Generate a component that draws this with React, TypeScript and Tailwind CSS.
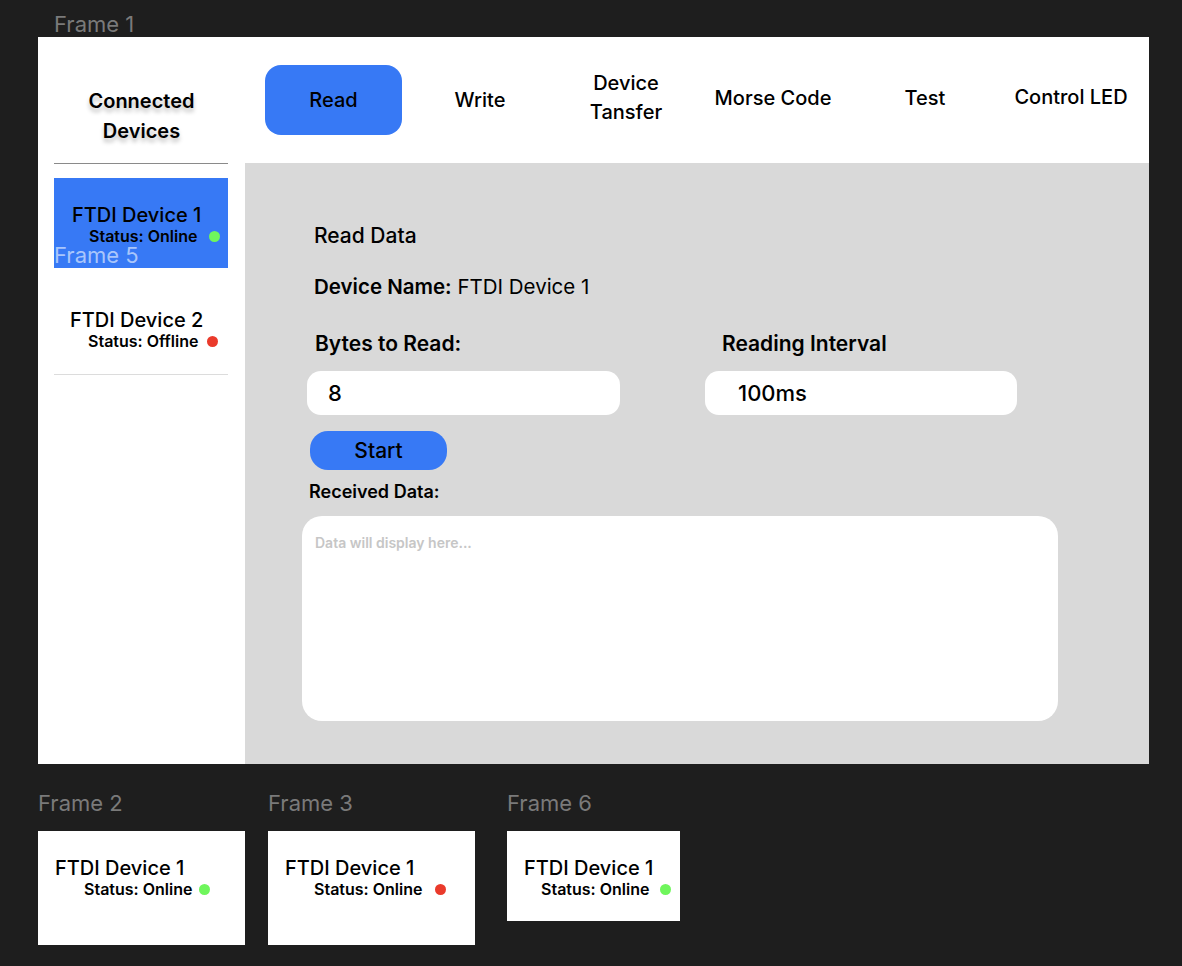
import React from "react";

const font = "font-['Inter','Liberation_Sans',sans-serif]";

function Dot({ color }: { color: "green" | "red" }) {
  return (
    <span
      className={
        "inline-block w-[11px] h-[11px] rounded-full shrink-0 " +
        (color === "green" ? "bg-[#6ff65c]" : "bg-[#ea3a2b]")
      }
    />
  );
}

function DeviceCard({
  name,
  status,
  dot,
  statusPl,
  gap,
  namePl,
  pt,
}: {
  name: string;
  status: string;
  dot: "green" | "red";
  statusPl: string;
  gap: string;
  namePl: string;
  pt: string;
}) {
  return (
    <div className={pt}>
      <div className={"text-[20px] leading-[22px] font-medium text-black whitespace-nowrap " + namePl}>{name}</div>
      <div className={"flex items-center h-[20px] whitespace-nowrap " + statusPl + " " + gap}>
        <span className="text-[16px] leading-[20px] font-semibold text-black">{status}</span>
        <Dot color={dot} />
      </div>
    </div>
  );
}

export default function App() {
  return (
    <div className={"w-[1182px] h-[966px] bg-[#1e1e1e] pt-[12px] pl-[38px] " + font}>
      <div className="ml-[16px] text-[22px] leading-[25px] text-[#7a7a7a]">Frame 1</div>

      {/* Frame 1 */}
      <div className="relative w-[1111px] h-[727px] bg-white flex flex-col">
        {/* Header row */}
        <div className="flex h-[126px]">
          <div className="w-[207px] pt-[49px] text-center text-[20px] leading-[30px] font-semibold text-black [text-shadow:0_4px_4px_rgba(0,0,0,0.25)]">
            Connected
            <br />
            Devices
          </div>
          <div className="flex pl-[20px] pt-[28px] items-start">
            <div className="w-[137px] h-[70px] rounded-[16px] bg-[#3779f5] flex items-center justify-center text-[20px] font-medium text-black">
              Read
            </div>
            <div className="w-[156px] h-[70px] flex items-center justify-center text-[20px] font-medium text-black">
              Write
            </div>
            <div className="w-[136px] h-[70px] flex items-center justify-center pb-[5px] text-[20px] leading-[29px] font-medium text-black text-center">
              Device
              <br />
              Tansfer
            </div>
            <div className="w-[158px] h-[70px] flex items-center justify-center pb-[4px] text-[20px] font-medium text-black whitespace-nowrap">
              Morse Code
            </div>
            <div className="w-[146px] h-[70px] flex items-center justify-center pb-[4px] text-[20px] font-medium text-black">
              Test
            </div>
            <div className="w-[146px] h-[70px] flex items-center justify-center pb-[6px] text-[20px] font-medium text-black whitespace-nowrap">
              Control LED
            </div>
          </div>
        </div>

        {/* Body row */}
        <div className="flex flex-1">
          {/* Sidebar list */}
          <div className="w-[207px] pl-[16px] pr-[17px]">
            <div className="h-px bg-[#8a8a8a]" />
            <div className="relative mt-[14px] h-[90px] bg-[#3779f5]">
              <DeviceCard
                name="FTDI Device 1"
                status="Status: Online"
                dot="green"
                namePl="pl-[18px]"
                statusPl="pl-[35px]"
                gap="gap-[12px]"
                pt="pt-[26px]"
              />
              <div className="absolute left-0 top-[65px] text-[22px] leading-[25px] text-[#a9c6fb]">Frame 5</div>
            </div>
            <div className="h-[106px]">
              <DeviceCard
                name="FTDI Device 2"
                status="Status: Offline"
                dot="red"
                namePl="pl-[16px]"
                statusPl="pl-[34px]"
                gap="gap-[9px]"
                pt="pt-[41px]"
              />
            </div>
            <div className="h-px bg-[#dcdcdc]" />
          </div>

          {/* Content */}
          <div className="flex-1 bg-[#d9d9d9] pl-[57px] pt-[61px] text-black">
            <div className="ml-[12px] text-[21px] leading-[24px] font-medium">Read Data</div>
            <div className="ml-[12px] mt-[27px] text-[20.5px] leading-[24px] whitespace-nowrap">
              <span className="font-semibold">Device Name:</span> <span className="font-normal">FTDI Device 1</span>
            </div>
            <div className="flex mt-[33px] text-[21px] leading-[24px] font-semibold whitespace-nowrap">
              <div className="ml-[13px] w-[407px]">Bytes to Read:</div>
              <div>Reading Interval</div>
            </div>
            <div className="flex mt-[15px]">
              <div className="ml-[5px] w-[313px] h-[44px] rounded-[14px] bg-white flex items-center pl-[21px] text-[22px] font-medium">
                8
              </div>
              <div className="ml-[85px] w-[312px] h-[44px] rounded-[14px] bg-white flex items-center pl-[33px] text-[22px] font-medium">
                100ms
              </div>
            </div>
            <div className="ml-[8px] mt-[16px] w-[137px] h-[39px] rounded-[18px] bg-[#3779f5] flex items-center justify-center text-[21px] font-medium">
              Start
            </div>
            <div className="ml-[7px] mt-[12px] text-[18px] leading-[20px] font-semibold whitespace-nowrap">Received Data:</div>
            <div className="mt-[14px] w-[756px] h-[205px] rounded-[20px] bg-white pl-[13px] pt-[14px]">
              <span className="text-[14px] leading-[16px] font-semibold text-[#c6c6c6]">Data will display here...</span>
            </div>
          </div>
        </div>
      </div>

      {/* Bottom frames */}
      <div className="flex mt-[27px] items-start">
        <div className="w-[207px]">
          <div className="text-[22px] leading-[25px] text-[#7a7a7a]">Frame 2</div>
          <div className="mt-[15px] h-[114px] bg-white">
            <DeviceCard
              name="FTDI Device 1"
              status="Status: Online"
              dot="green"
              namePl="pl-[17px]"
              statusPl="pl-[46px]"
              gap="gap-[7px]"
              pt="pt-[26px]"
            />
          </div>
        </div>
        <div className="ml-[23px] w-[207px]">
          <div className="text-[22px] leading-[25px] text-[#7a7a7a]">Frame 3</div>
          <div className="mt-[15px] h-[114px] bg-white">
            <DeviceCard
              name="FTDI Device 1"
              status="Status: Online"
              dot="red"
              namePl="pl-[17px]"
              statusPl="pl-[46px]"
              gap="gap-[13px]"
              pt="pt-[26px]"
            />
          </div>
        </div>
        <div className="ml-[32px] w-[173px]">
          <div className="text-[22px] leading-[25px] text-[#7a7a7a]">Frame 6</div>
          <div className="mt-[15px] h-[90px] bg-white">
            <DeviceCard
              name="FTDI Device 1"
              status="Status: Online"
              dot="green"
              namePl="pl-[17px]"
              statusPl="pl-[34px]"
              gap="gap-[11px]"
              pt="pt-[26px]"
            />
          </div>
        </div>
      </div>
    </div>
  );
}
